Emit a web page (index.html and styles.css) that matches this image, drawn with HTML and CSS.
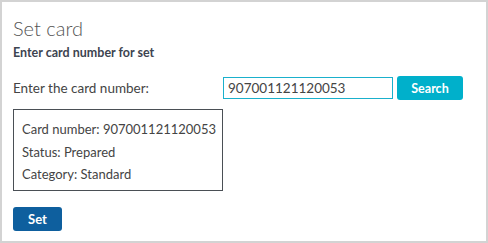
FILE: index.html
```html
<!DOCTYPE html>
<html lang="en">
<head>
    <meta charset="UTF-8">
    <meta name="viewport" content="width=device-width, initial-scale=1.0">
    <title>Set card</title>
    <link rel="stylesheet" href="styles.css">
</head>
<body>
    <div class="panel">
        <h1 class="title">Set card</h1>
        <p class="subtitle">Enter card number for set</p>

        <!-- Baris pencarian kartu -->
        <div class="search-row">
            <label class="search-label" for="card-number">Enter the card number:</label>
            <input class="card-input" id="card-number" type="text" value="907001121120053">
            <button class="search-button">Search</button>
        </div>

        <!-- Info kartu -->
        <div class="card-info">
            <div class="info-line">Card number: 907001121120053</div>
            <div class="info-line">Status: Prepared</div>
            <div class="info-line">Category: Standard</div>
        </div>

        <button class="set-button">Set</button>
    </div>
</body>
</html>
```

FILE: styles.css
```css
/* Reset halaman */
html, body {
    margin: 0;
    padding: 0;
}

body {
    font-family: "Lato", "Open Sans", sans-serif;
    color: #444;
    background-color: white;
}

/* Panel utama */
.panel {
    width: 488px;
    height: 243px;
    border: 2px solid #d3d3d3;
    padding: 13px 11px 0 11px;
    box-sizing: border-box;
}

.title {
    margin: 0;
    font-size: 20px;
    font-weight: 300;
    line-height: 27px;
    color: #555;
}

.subtitle {
    margin: 3px 0 0 0;
    font-size: 12.5px;
    font-weight: bold;
    line-height: 16px;
    color: #3d4450;
}

/* Baris pencarian */
.search-row {
    display: flex;
    align-items: center;
    margin-top: 15px;
}

.search-label {
    width: 210px;
    font-size: 13.5px;
    color: #444;
}

.card-input {
    width: 170px;
    height: 22px;
    box-sizing: border-box;
    border: 1px solid #1ab0cc;
    padding: 0 4px;
    font-family: inherit;
    font-size: 13.5px;
    color: #444;
    outline: none;
}

.search-button {
    margin-left: 4px;
    width: 66px;
    height: 24px;
    border: none;
    border-radius: 3px;
    background-color: #00b0cb;
    color: white;
    font-family: inherit;
    font-size: 12.5px;
    font-weight: bold;
    cursor: pointer;
}

/* Kotak info kartu */
.card-info {
    width: 210px;
    box-sizing: border-box;
    margin-top: 9px;
    border: 1px solid #4a4f55;
    padding: 8px 8px 4px 8px;
    white-space: nowrap;
}

.info-line {
    font-size: 13px;
    line-height: 22.5px;
    color: #444;
}

.set-button {
    margin-top: 16px;
    width: 49px;
    height: 24px;
    border: none;
    border-radius: 3px;
    background-color: #0e5f9e;
    color: white;
    font-family: inherit;
    font-size: 13px;
    font-weight: bold;
    cursor: pointer;
}
```
